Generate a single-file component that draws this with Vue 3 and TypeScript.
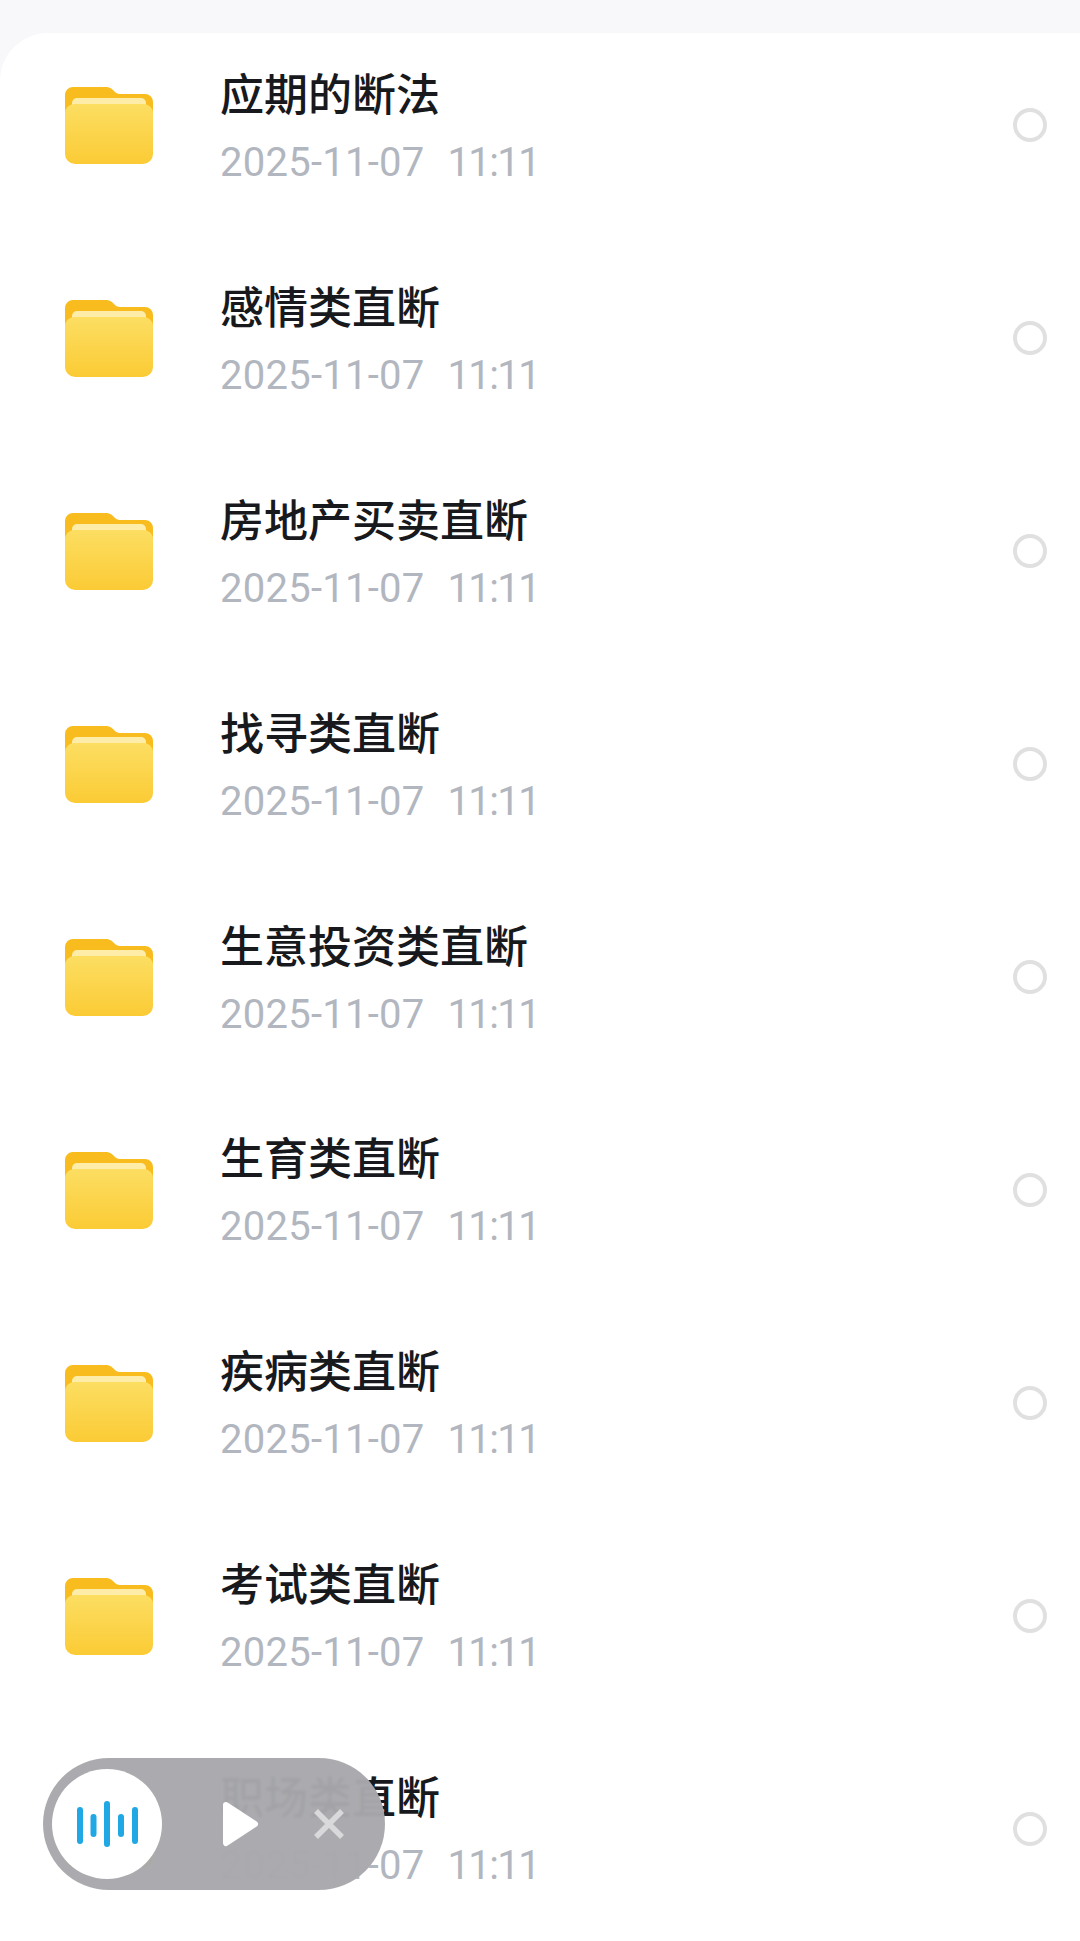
<script setup lang="ts">
const titles: string[] = ['应期的断法','感情类直断','房地产买卖直断','找寻类直断','生意投资类直断','生育类直断','疾病类直断','考试类直断','职场类直断']
</script>

<template>
  <div class="page">
    <div class="card">
      <div v-for="t in titles" :key="t" class="row">
        <svg class="folder" viewBox="0 0 88 78" width="88" height="78">
          <defs>
            <linearGradient :id="'f' + t" x1="0" y1="0" x2="0" y2="1">
              <stop offset="0" stop-color="#fcde62" />
              <stop offset="1" stop-color="#fbcb35" />
            </linearGradient>
          </defs>
          <path d="M0 9a8 8 0 0 1 8-8h32c5 0 7 2 9 4s3 3 7 3h24a8 8 0 0 1 8 8v20H0z" fill="#f9bc1e" />
          <rect x="7" y="12" width="74" height="12" rx="5" fill="#fdeda8" />
          <path d="M0 27a9 9 0 0 1 9-9h70a9 9 0 0 1 9 9v41a10 10 0 0 1-10 10H10A10 10 0 0 1 0 68z" :fill="'url(#f' + t + ')'" />
        </svg>
        <div class="info">
          <div class="title">{{ t }}</div>
          <div class="date"><span class="day">2025-11-07</span><span class="time">11:11</span></div>
        </div>
        <span class="radio"></span>
      </div>
    </div>
    <div class="pill">
      <div class="disc">
        <svg viewBox="0 0 62 52" width="62" height="52">
          <g stroke="#1fa8e4" stroke-width="6" stroke-linecap="round" fill="none">
            <path d="M4 12v31M17.500 19v17M31 6v40M45 19v17M59 12v31" />
          </g>
        </svg>
      </div>
      <svg class="play" viewBox="0 0 38 50" width="38" height="50">
        <path d="M4 6 33 25 4 44z" fill="#fff" stroke="#fff" stroke-width="6" stroke-linejoin="round" />
      </svg>
      <svg class="close" viewBox="0 0 30 30" width="30" height="30">
        <path d="M2 2 28 28M28 2 2 28" stroke="#d9d9db" stroke-width="5.500" />
      </svg>
    </div>
  </div>
</template>

<style scoped>
.page {
  position: relative;
  width: 1080px;
  height: 1941px;
  overflow: hidden;
  background: #f8f8fa;
  padding-top: 33px;
  box-sizing: border-box;
  font-family: Roboto, "Noto Sans CJK SC", sans-serif;
}
.card {
  background: #fff;
  border-radius: 48px 0 0 0;
  height: 1908px;
  overflow: hidden;
}
.row {
  display: flex;
  align-items: center;
  height: 212.9px;
  padding: 0 33px 0 65px;
  box-sizing: border-box;
}
.row:first-child {
  margin-top: -14px;
}
.folder {
  flex: none;
}
.info {
  flex: 1;
  margin-left: 67px;
}
.title {
  font-family: "Noto Sans CJK SC", sans-serif;
  font-size: 44px;
  font-weight: 500;
  line-height: 56px;
  color: #17191d;
}
.date {
  display: flex;
  gap: 23px;
  margin-top: 19px;
  font-size: 40px;
  line-height: 48px;
  color: #b2b6bf;
}
.day {
  letter-spacing: 0.25px;
}
.time {
  letter-spacing: -1.6px;
}
.radio {
  width: 34px;
  height: 34px;
  box-sizing: border-box;
  border: 4px solid #e0e0e0;
  border-radius: 50%;
}
.pill {
  position: absolute;
  left: 43px;
  top: 1758px;
  width: 342px;
  height: 132px;
  border-radius: 66px;
  background: rgba(168, 168, 172, 0.965);
  backdrop-filter: blur(1.5px);
  display: flex;
  align-items: center;
}
.disc {
  width: 110px;
  height: 110px;
  margin-left: 9px;
  border-radius: 50%;
  background: #fff;
  display: flex;
  align-items: center;
  justify-content: center;
  flex: none;
}
.play {
  margin-left: 60px;
  flex: none;
}
.close {
  margin-left: 54px;
  flex: none;
}
</style>
